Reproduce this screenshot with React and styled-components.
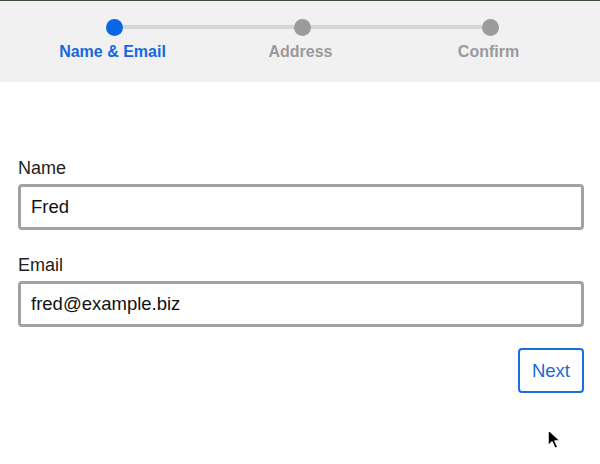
import React from "react";
import styled, { createGlobalStyle } from "styled-components";

const Global = createGlobalStyle`
  html, body { margin: 0; padding: 0; background: #ffffff; }
  body { font-family: "Liberation Sans", Arial, Helvetica, sans-serif; color: #222; }
  * { box-sizing: border-box; }
`;

const Page = styled.div`
  position: relative;
  width: 600px;
  height: 464px;
  overflow: hidden;
  background: #fff;
`;

const Header = styled.header`
  height: 82px;
  background: #f1f1f1;
  border-top: 1px solid #3c4b3a;
  padding: 0 16px 0 20px;
`;

const Steps = styled.ol`
  position: relative;
  display: grid;
  grid-template-columns: repeat(3, 1fr);
  margin: 0;
  padding: 0;
  list-style: none;
`;

const Track = styled.div`
  position: absolute;
  left: 16.67%;
  right: 16.67%;
  top: 24px;
  height: 4px;
  background: #d6d6d6;
`;

const Step = styled.li`
  position: relative;
  display: flex;
  flex-direction: column;
  align-items: center;
  padding-top: 18px;
`;

const Dot = styled.span`
  width: 17px;
  height: 17px;
  border-radius: 50%;
  background: ${(p) => (p.$active ? "#0a66e4" : "#9b9b9b")};
`;

const StepLabel = styled.span`
  margin-top: 6px;
  margin-left: -3px;
  font-size: 16px;
  line-height: 20px;
  font-weight: bold;
  color: ${(p) => (p.$active ? "#1668db" : "#9a9a9a")};
`;

const Form = styled.form`
  display: flex;
  flex-direction: column;
  padding: 75px 16px 0 18px;
`;

const Field = styled.div`
  display: flex;
  flex-direction: column;
  margin-bottom: ${(p) => p.$gap || 0}px;
`;

const Label = styled.label`
  font-size: 18px;
  line-height: 22px;
  color: #222;
  margin-bottom: 5px;
`;

const Input = styled.input`
  height: 46px;
  border: 3px solid #a2a2a2;
  border-radius: 4px;
  padding: 0 10px;
  font-family: "Liberation Sans", Arial, Helvetica, sans-serif;
  font-size: 18.5px;
  color: #111;
  background: #fff;
  outline: none;
`;

const Actions = styled.div`
  display: flex;
  justify-content: flex-end;
  margin-top: 21px;
`;

const NextButton = styled.button`
  width: 66px;
  height: 45px;
  border: 2px solid #1a6fe0;
  border-radius: 4px;
  background: #fff;
  color: #1a6ad8;
  font-family: "Liberation Sans", Arial, Helvetica, sans-serif;
  font-size: 18.5px;
  padding: 0;
  cursor: pointer;
`;

const Cursor = styled.svg`
  position: absolute;
  left: 546px;
  top: 428px;
`;

const steps = ["Name & Email", "Address", "Confirm"];

export default function App() {
  return (
    <>
      <Global />
      <Page>
        <Header>
          <Steps>
            <Track />
            {steps.map((s, i) => (
              <Step key={s}>
                <Dot $active={i === 0} />
                <StepLabel $active={i === 0}>{s}</StepLabel>
              </Step>
            ))}
          </Steps>
        </Header>
        <Form onSubmit={(e) => e.preventDefault()}>
          <Field $gap={24}>
            <Label htmlFor="name">Name</Label>
            <Input id="name" defaultValue="Fred" />
          </Field>
          <Field>
            <Label htmlFor="email">Email</Label>
            <Input id="email" defaultValue="fred@example.biz" />
          </Field>
          <Actions>
            <NextButton type="submit">Next</NextButton>
          </Actions>
        </Form>
        <Cursor width="17" height="23" viewBox="0 0 17 23">
          <path
            d="M2 1.5 L2 18 L6 14 L9 20.5 L12 19.3 L9 13 L14.5 13 Z"
            fill="#000"
            stroke="#fff"
            strokeWidth="1.5"
            strokeLinejoin="round"
          />
        </Cursor>
      </Page>
    </>
  );
}
